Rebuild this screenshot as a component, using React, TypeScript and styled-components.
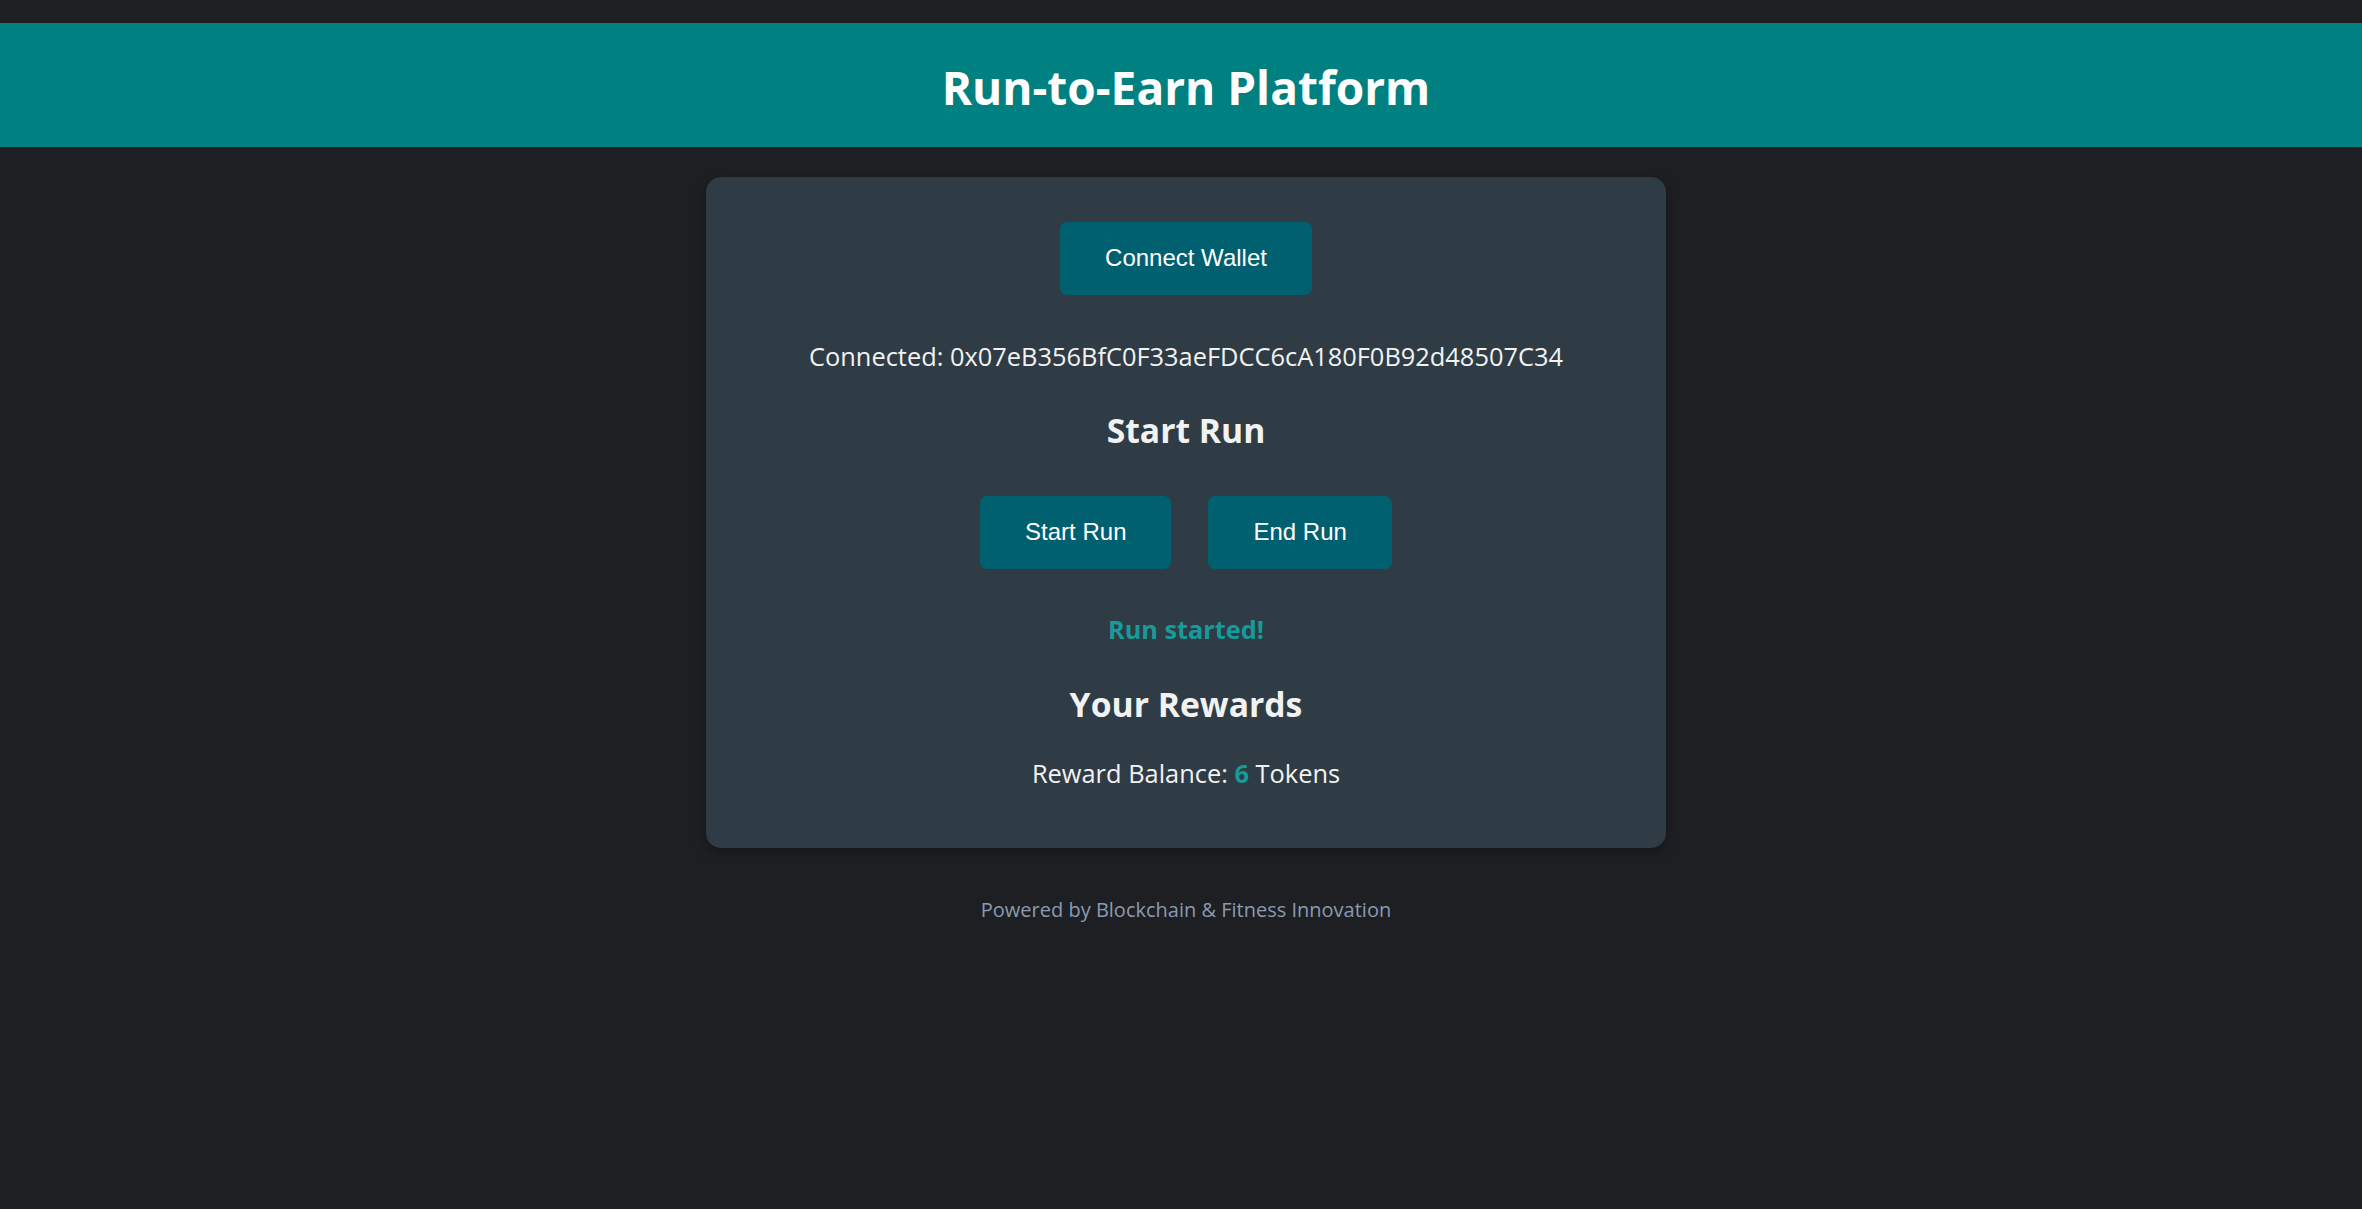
import React from "react";
import styled, { createGlobalStyle } from "styled-components";

const GlobalStyle = createGlobalStyle`
  html, body {
    margin: 0;
    padding: 0;
    background: #1e1f23;
  }
  body {
    font-family: "Open Sans", "Noto Sans", sans-serif;
    color: #f2f2f2;
  }
`;

const Page = styled.div`
  min-height: 1209px;
  padding-top: 23px;
  display: flex;
  flex-direction: column;
  align-items: center;
`;

const Header = styled.header`
  align-self: stretch;
  background: #008080;
  height: 124px;
  padding-left: 10px;
  padding-top: 3px;
  box-sizing: border-box;
  display: flex;
  align-items: center;
  justify-content: center;
`;

const Title = styled.h1`
  margin: 0;
  font-size: 46px;
  font-weight: 700;
  color: #ffffff;
`;

const Main = styled.div`
  padding-left: 10px;
  display: flex;
  flex-direction: column;
  align-items: center;
`;

const Card = styled.main`
  margin-top: 30px;
  width: 960px;
  box-sizing: border-box;
  background: #2f3c45;
  border-radius: 15px;
  box-shadow: 0 4px 12px rgba(0, 0, 0, 0.3);
  padding: 45px 45px 0;
  height: 671px;
  display: flex;
  flex-direction: column;
  align-items: center;
`;

const Button = styled.button`
  font-family: "Liberation Sans", Arial, sans-serif;
  font-size: 24px;
  line-height: 28px;
  color: #ffffff;
  background: #006070;
  border: none;
  border-radius: 7px;
  padding: 22px 45px 23px;
  cursor: pointer;
`;

const ButtonRow = styled.div<{ $top: number }>`
  display: flex;
  gap: 37px;
  margin-top: ${(p) => p.$top}px;
`;

const Text = styled.p<{ $top: number }>`
  margin: ${(p) => p.$top}px 0 0;
  font-size: 25.4px;
  line-height: 32px;
`;

const Heading = styled.h2<{ $top: number }>`
  margin: ${(p) => p.$top}px 0 0;
  font-size: 33.7px;
  line-height: 48px;
  font-weight: 700;
`;

const Status = styled.p`
  margin: 42px 0 0;
  font-size: 25.3px;
  line-height: 36px;
  font-weight: 700;
  color: #179a9a;
`;

const Accent = styled.span`
  font-weight: 700;
  color: #179a9a;
`;

const Footer = styled.footer`
  margin-top: 48px;
  font-size: 20px;
  color: #8a9bb0;
`;

export default function App() {
  return (
    <>
      <GlobalStyle />
      <Page>
        <Header>
          <Title>Run-to-Earn Platform</Title>
        </Header>
        <Main>
          <Card>
            <Button>Connect Wallet</Button>
            <Text $top={45}>Connected: 0x07eB356BfC0F33aeFDCC6cA180F0B92d48507C34</Text>
            <Heading $top={34}>Start Run</Heading>
            <ButtonRow $top={42}>
              <Button>Start Run</Button>
              <Button>End Run</Button>
            </ButtonRow>
            <Status>Run started!</Status>
            <Heading $top={33}>Your Rewards</Heading>
            <Text $top={29}>
              Reward Balance: <Accent>6</Accent> Tokens
            </Text>
          </Card>
          <Footer>Powered by Blockchain &amp; Fitness Innovation</Footer>
        </Main>
      </Page>
    </>
  );
}
